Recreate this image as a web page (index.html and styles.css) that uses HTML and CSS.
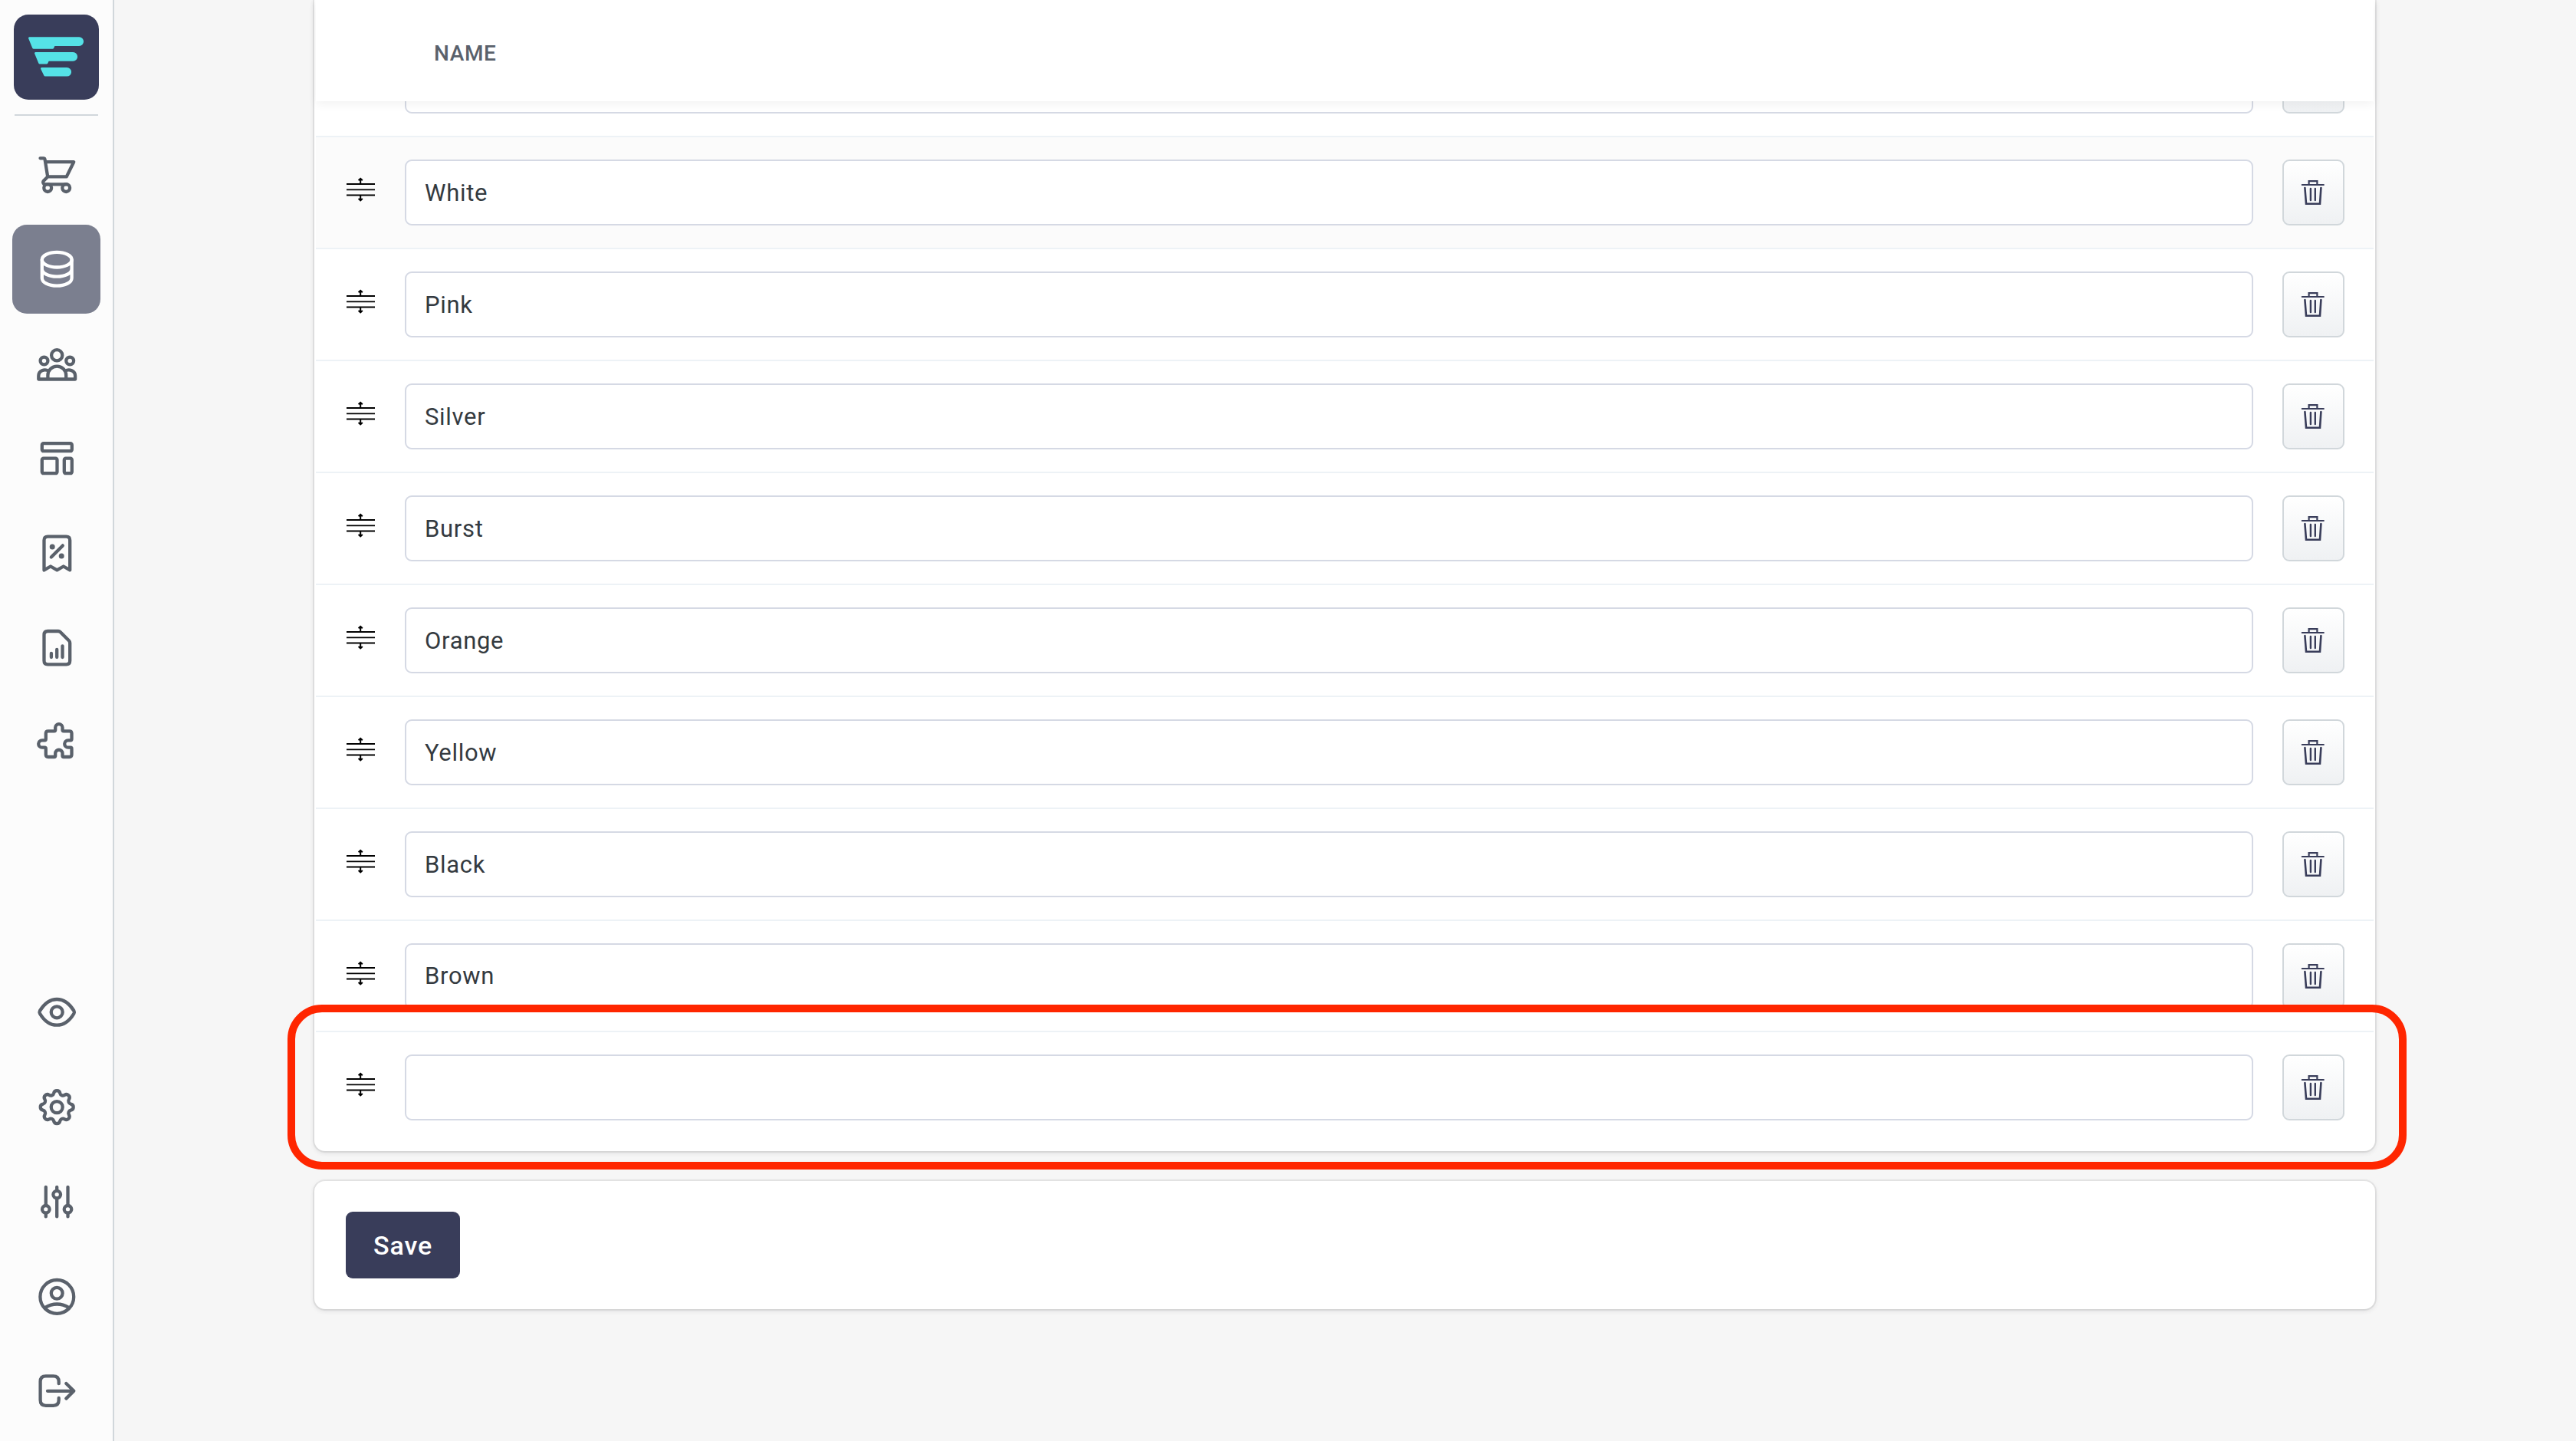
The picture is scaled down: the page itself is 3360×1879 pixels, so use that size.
FILE: index.html
```
<!DOCTYPE html>
<html lang="en">
<head>
    <meta charset="UTF-8">
    <meta name="viewport" content="width=device-width, initial-scale=1.0">
    <title>Colors</title>
    <link rel="stylesheet" href="styles.css">
</head>
<body>
  <!-- shared icons -->
  <svg class="sprite">
    <symbol id="drag" viewBox="0 0 40 34">
      <path d="M1 10H38M1 17.3H38M1 24.5H38" stroke-width="1.8"/>
      <path d="M19.2 10V3M16.6 5.2L19.2 2.8L21.8 5.2M19.2 24.5V31.5M16.6 29.1L19.2 31.5L21.8 29.1" stroke-width="2"/>
    </symbol>
    <symbol id="trash" viewBox="0 0 34 34">
      <path d="M2.8 7H30.8M11.6 6.5V2.2H22.4V6.5" stroke-width="2.2"/>
      <path d="M6.4 11L8 31.7H26L27.4 11" stroke-width="2.6"/>
      <path d="M13.9 12V27M19.8 12V27" stroke-width="2.4"/>
    </symbol>
  </svg>

  <div class="page">
    <nav class="sidebar">
      <a class="logo" href="#">
        <svg width="111" height="111" viewBox="0 0 111 111">
          <path d="M20.5 29.3H85.3a5.8 5.8 0 0 1 0 11.6H53.4L52 44a1.5 1.5 0 0 1-1.3.8H26a2 2 0 0 1-1.8-1.3L19.1 31a1.3 1.3 0 0 1 1.4-1.7z"/>
          <path d="M28.5 49.1H77.3a5.8 5.8 0 0 1 0 11.6H45.6L44.2 63.8a1.5 1.5 0 0 1-1.3.8H34a2 2 0 0 1-1.8-1.3L27.1 50.8a1.3 1.3 0 0 1 1.4-1.7z"/>
          <path d="M36.5 69H69.3a5.8 5.8 0 0 1 0 11.6H41a2 2 0 0 1-1.8-1.3L35.1 70.7a1.3 1.3 0 0 1 1.4-1.7z"/>
        </svg>
      </a>
      <div class="divider"></div>
      <div class="menu">
        <a class="item" href="#">
          <svg class="icon" viewBox="0 0 60 60"><path d="M8.5 8.3H12.6Q14.3 8.3 14.6 10L18.2 32.4H42.8L52.2 13.2H15.5M18.2 32.4L13.2 37.4Q11.6 39.2 12.6 41Q13.2 42.3 15 42.3H43"/><circle cx="18.2" cy="47.1" r="4.9"/><circle cx="42.2" cy="47.1" r="4.9"/></svg>
        </a>
        <a class="item active" href="#">
          <svg class="icon" viewBox="0 0 60 60"><ellipse cx="30.2" cy="17.7" rx="19.4" ry="9.8"/><path d="M10.8 17.7V41.7C10.8 47.2 19.4 51.6 30.2 51.6S49.6 47.2 49.6 41.7V17.7M10.8 29.7C10.8 35.2 19.4 39.6 30.2 39.6S49.6 35.2 49.6 29.7"/></svg>
        </a>
        <a class="item" href="#">
          <svg class="icon" viewBox="0 0 60 60"><circle cx="30.2" cy="18.2" r="7.1"/><circle cx="13.5" cy="25.5" r="4.9"/><circle cx="47.2" cy="25.5" r="4.9"/><path d="M18.4 49.5V44.5a11.9 11.9 0 0 1 23.8 0V49.5M19.5 38.8C14 35.6 6.3 38.6 6.3 45V49.5H54.1V45C54.1 38.6 46.4 35.6 40.9 38.8"/></svg>
        </a>
        <a class="item" href="#">
          <svg class="icon" viewBox="0 0 60 60"><rect x="10.8" y="10.2" width="39" height="10" rx="2"/><rect x="10.8" y="29.7" width="19.7" height="19.5" rx="2"/><rect x="39.8" y="29.7" width="10" height="19.5" rx="2"/></svg>
        </a>
        <a class="item" href="#">
          <svg class="icon" viewBox="0 0 60 60"><path d="M13.5 51.4V12.5Q13.5 7.7 18.3 7.7H42.4Q47.2 7.7 47.2 12.5V51.4L38.8 46.5L30.4 51.4L22 46.5ZM22.8 34.4L37.8 19.4"/><circle class="dot" cx="24.2" cy="21" r="3.5"/><circle class="dot" cx="36.2" cy="33" r="3.5"/></svg>
        </a>
        <a class="item" href="#">
          <svg class="icon" viewBox="0 0 60 60"><path d="M18.3 8H32Q33.6 8 34.8 9.2L45.8 20.2Q47.2 21.6 47.2 23.4V46.5Q47.2 51.3 42.4 51.3H18.3Q13.5 51.3 13.5 46.5V12.8Q13.5 8 18.3 8ZM22.9 37V42M30.2 32V42M37.5 27.3V42"/></svg>
        </a>
        <a class="item" href="#">
          <svg class="icon" viewBox="0 0 60 60"><path d="M18.8 15.3H26.7q1.5 0 1.5-1.5V10.7a4.65 4.65 0 0 1 9.3 0V13.8q0 1.5 1.5 1.5H46.5q3 0 3 3V25.8q0 1.5-1.5 1.5H44.9a4.7 4.7 0 0 0 0 9.4H48q1.5 0 1.5 1.5V46q0 3-3 3H39q-1.5 0-1.5-1.5V44.4a4.65 4.65 0 0 0-9.3 0V47.5q0 1.5-1.5 1.5H18.8q-3 0-3-3V38.2q0-1.5-1.5-1.5H10.9a4.7 4.7 0 0 1 0-9.4H14.3q1.5 0 1.5-1.5V18.3q0-3 3-3z"/></svg>
        </a>
      </div>
      <div class="menu menu-bottom">
        <a class="item" href="#">
          <svg class="icon" viewBox="0 0 60 60"><path d="M8 28C13 20 20 13 30.2 13S47.4 20 52.4 28q1 1.8 0 3.6C47.4 40 40.4 46.7 30.2 46.7S13 40 8 31.6q-1-1.8 0-3.6z"/><circle cx="30.2" cy="29.8" r="7.5"/></svg>
        </a>
        <a class="item" href="#">
          <svg class="icon" viewBox="0 0 60 60"><g transform="translate(30.2 29.6)"><circle r="7.5"/><path d="M18.16 -4.03A4.1 4.1 0 0 1 18.16 4.03A4 4 0 0 0 15.69 9.99A4.1 4.1 0 0 1 9.99 15.69A4 4 0 0 0 4.03 18.16A4.1 4.1 0 0 1 -4.03 18.16A4 4 0 0 0 -9.99 15.69A4.1 4.1 0 0 1 -15.69 9.99A4 4 0 0 0 -18.16 4.03A4.1 4.1 0 0 1 -18.16 -4.03A4 4 0 0 0 -15.69 -9.99A4.1 4.1 0 0 1 -9.99 -15.69A4 4 0 0 0 -4.03 -18.16A4.1 4.1 0 0 1 4.03 -18.16A4 4 0 0 0 9.99 -15.69A4.1 4.1 0 0 1 15.69 -9.99A4 4 0 0 0 18.16 -4.03Z"/></g></svg>
        </a>
        <a class="item" href="#">
          <svg class="icon" viewBox="0 0 60 60"><path d="M15.8 10.8V34.9M15.8 44.7V49.4M44.5 10.8V34.9M44.5 44.7V49.4M30.2 10.8V15.9M30.2 25.7V49.4"/><circle cx="15.8" cy="39.8" r="4.8"/><circle cx="30.2" cy="20.6" r="4.8"/><circle cx="44.5" cy="39.8" r="4.8"/></svg>
        </a>
        <a class="item" href="#">
          <svg class="icon" viewBox="0 0 60 60"><circle cx="30.3" cy="29.9" r="21.9"/><circle cx="30.2" cy="25.2" r="7.4"/><path d="M15.2 43.9Q22 39.5 30.3 39.5T45.4 43.9"/></svg>
        </a>
        <a class="item" href="#">
          <svg class="icon" viewBox="0 0 60 60"><path d="M32.7 20.2V17.5Q32.7 10.3 25.5 10.3H15.8Q8.6 10.3 8.6 17.5V41.6Q8.6 48.8 15.8 48.8H25.5Q32.7 48.8 32.7 41.6V39M18 29.8H52.3M42.3 20L52.3 29.8L42.3 39.6"/></svg>
        </a>
      </div>
    </nav>

    <main class="content">
      <section class="card list">
        <div class="list-header">Name</div>
        <div class="row first">
          <svg class="drag"><use href="#drag"/></svg>
          <input type="text" class="name" value="">
          <button type="button" class="delete"><svg><use href="#trash"/></svg></button>
        </div>
        <div class="row hovered">
          <svg class="drag"><use href="#drag"/></svg>
          <input type="text" class="name" value="White">
          <button type="button" class="delete"><svg><use href="#trash"/></svg></button>
        </div>
        <div class="row">
          <svg class="drag"><use href="#drag"/></svg>
          <input type="text" class="name" value="Pink">
          <button type="button" class="delete"><svg><use href="#trash"/></svg></button>
        </div>
        <div class="row">
          <svg class="drag"><use href="#drag"/></svg>
          <input type="text" class="name" value="Silver">
          <button type="button" class="delete"><svg><use href="#trash"/></svg></button>
        </div>
        <div class="row">
          <svg class="drag"><use href="#drag"/></svg>
          <input type="text" class="name" value="Burst">
          <button type="button" class="delete"><svg><use href="#trash"/></svg></button>
        </div>
        <div class="row">
          <svg class="drag"><use href="#drag"/></svg>
          <input type="text" class="name" value="Orange">
          <button type="button" class="delete"><svg><use href="#trash"/></svg></button>
        </div>
        <div class="row">
          <svg class="drag"><use href="#drag"/></svg>
          <input type="text" class="name" value="Yellow">
          <button type="button" class="delete"><svg><use href="#trash"/></svg></button>
        </div>
        <div class="row">
          <svg class="drag"><use href="#drag"/></svg>
          <input type="text" class="name" value="Black">
          <button type="button" class="delete"><svg><use href="#trash"/></svg></button>
        </div>
        <div class="row before-new">
          <svg class="drag"><use href="#drag"/></svg>
          <input type="text" class="name" value="Brown">
          <button type="button" class="delete"><svg><use href="#trash"/></svg></button>
        </div>
        <div class="row new">
          <svg class="drag"><use href="#drag"/></svg>
          <input type="text" class="name" value="">
          <button type="button" class="delete"><svg><use href="#trash"/></svg></button>
        </div>
        <div class="highlight"></div>
      </section>

      <section class="card actions">
        <button type="button" class="save">Save</button>
      </section>
    </main>
  </div>
</body>
</html>
```
FILE: styles.css
```
* {
  box-sizing: border-box;
}

body {
  margin: 0;
  background-color: #f6f6f6;
  font-family: Roboto, "Liberation Sans", sans-serif;
  color: #343a40;
}

.sprite {
  display: none;
}

.page {
  display: flex;
  height: 1879px;
  overflow: hidden;
}

/* sidebar */
.sidebar {
  display: flex;
  flex-direction: column;
  align-items: center;
  width: 149px;
  padding: 19px 0 7px;
  background-color: #fcfcfc;
  border-right: 2px solid #d1d7db;
}

.logo {
  width: 111px;
  height: 111px;
  border-radius: 19px;
  background-color: #393d5a;
}

.logo svg {
  display: block;
  fill: #55e2e7;
}

.divider {
  width: 109px;
  height: 2px;
  margin: 19px 0;
  background-color: #d1d7db;
}

.menu {
  display: flex;
  flex-direction: column;
  gap: 7.4px;
}

.menu-bottom {
  margin-top: auto;
}

.item {
  display: flex;
  align-items: center;
  justify-content: center;
  width: 115px;
  height: 116px;
  border-radius: 19px;
  color: #5a616b;
}

.item.active {
  background-color: #7b7f8f;
  color: #fff;
}

.icon {
  width: 60px;
  height: 60px;
  fill: none;
  stroke: currentColor;
  stroke-width: 4.3;
  stroke-linecap: round;
  stroke-linejoin: round;
}

.icon .dot {
  fill: currentColor;
  stroke: none;
}

/* content */
.content {
  flex: 1;
  padding-left: 261px;
}

.card {
  width: 2688px;
  background-color: #fff;
  border-radius: 14px;
  box-shadow: 0 0 0 2px rgba(63, 63, 68, 0.08), 0 2px 6px 0 rgba(63, 63, 68, 0.15);
}

.list {
  position: relative;
  height: 1501px;
  padding: 0 2px;
  border-top-left-radius: 0;
  border-top-right-radius: 0;
}

.list-header {
  position: relative;
  z-index: 1;
  height: 132px;
  padding: 53px 0 0 154px;
  background-color: #fff;
  box-shadow: 0 4px 12px rgba(0, 0, 0, 0.05);
  font-size: 28px;
  font-weight: 500;
  line-height: 34px;
  letter-spacing: 0.6px;
  text-transform: uppercase;
  color: #5a616b;
}

.row {
  display: flex;
  align-items: center;
  height: 146px;
  padding: 0 38px 0 39px;
  background-color: #fff;
  border-bottom: 2px solid #edf2f6;
}

/* scrolled under the header */
.row.first {
  margin-top: -99px;
}

.row.hovered {
  background-color: #fbfbfb;
}

.row.before-new {
  height: 145px;
}

.row.new {
  height: 144px;
  border-bottom: none;
}

.drag {
  width: 40px;
  height: 34px;
  margin-bottom: 8px;
  fill: none;
  stroke: #000;
}

.name {
  flex: 1;
  height: 86px;
  margin: 0 38px 0 37px;
  padding: 0 24px;
  border: 2px solid #d5d9e4;
  border-radius: 9px;
  background-color: #fff;
  font-family: inherit;
  font-size: 31px;
  letter-spacing: 0.7px;
  color: #343a40;
}

.delete {
  display: flex;
  align-items: center;
  justify-content: center;
  width: 81px;
  height: 86px;
  padding: 0 1px 0 0;
  border: 2px solid #d1d7db;
  border-radius: 9px;
  background: linear-gradient(#fff, #eff1f3);
}

.delete svg {
  width: 34px;
  height: 34px;
  fill: none;
  stroke: #393d5a;
  stroke-linecap: round;
}

.highlight {
  position: absolute;
  top: 1310px;
  left: -35px;
  z-index: 2;
  width: 2764px;
  height: 215px;
  border: 10px solid #ff2600;
  border-radius: 45px;
}

.actions {
  height: 167px;
  margin-top: 39px;
  padding: 40px 41px;
}

.save {
  width: 149px;
  height: 87px;
  padding: 0;
  border: none;
  border-radius: 9px;
  background-color: #393d5a;
  font-family: inherit;
  font-size: 34px;
  font-weight: 500;
  letter-spacing: 0.9px;
  color: #fff;
}
```
